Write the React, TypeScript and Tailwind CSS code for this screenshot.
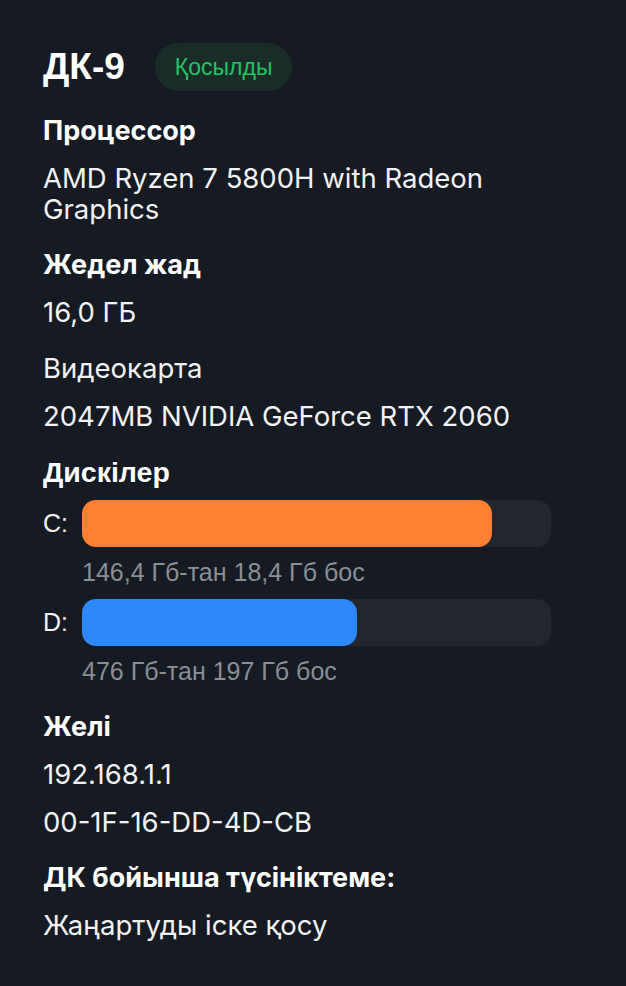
import React from "react";

const inter = { fontFamily: "Inter, 'Noto Sans', sans-serif" };
const arial = { fontFamily: "'Liberation Sans', Arial, sans-serif" };

function Heading({ children, font = "inter" }: { children: React.ReactNode; font?: "inter" | "arial" }) {
  return (
    <div
      className={
        font === "inter"
          ? "text-[27px] font-bold leading-[30px] text-white"
          : "text-[28.5px] font-bold leading-[30px] text-white"
      }
      style={font === "inter" ? inter : arial}
    >
      {children}
    </div>
  );
}

function Value({ children }: { children: React.ReactNode }) {
  return (
    <div className="mt-[17px] text-[27.5px] leading-[31px] text-[#f2f2f2]" style={inter}>
      {children}
    </div>
  );
}

function Disk({ label, pct, color, text }: { label: string; pct: number; color: string; text: string }) {
  return (
    <div className="flex flex-col">
      <div className="flex items-center">
        <div className="w-[39px] text-[25px] text-[#f2f2f2]" style={arial}>
          {label}
        </div>
        <div className="h-[47px] w-[469px] rounded-[14px] bg-[#22262d]">
          <div className={`h-full rounded-[14px] ${color}`} style={{ width: `${pct}%` }} />
        </div>
      </div>
      <div className="ml-[39px] mt-[12px] text-[25px] leading-[26px] text-[#8a8e95]" style={arial}>
        {text}
      </div>
    </div>
  );
}

export default function App() {
  return (
    <div className="min-h-[986px] w-[626px] bg-[#161b23] px-[43px] pt-[43px]">
      <div className="flex items-center gap-[30px]">
        <div className="text-[37px] font-bold leading-[48px] text-white" style={arial}>
          ДК-9
        </div>
        <div
          className="flex h-[48px] items-center rounded-full bg-[#1a2c27] px-[20px] text-[23px] text-[#22c463]"
          style={arial}
        >
          Қосылды
        </div>
      </div>

      <div className="mt-[25px] flex flex-col">
        <Heading>Процессор</Heading>
        <Value>
          AMD Ryzen 7 5800H with Radeon
          <br />
          Graphics
        </Value>

        <div className="mt-[25px]">
          <Heading>Жедел жад</Heading>
        </div>
        <Value>16,0 ГБ</Value>

        <div className="mt-[25px] text-[27.5px] leading-[31px] text-[#f2f2f2]" style={inter}>
          Видеокарта
        </div>
        <Value>2047MB NVIDIA GeForce RTX 2060</Value>

        <div className="mt-[25px]">
          <Heading font="arial">Дискілер</Heading>
        </div>
        <div className="mt-[13px] flex flex-col gap-[14px]">
          <Disk label="C:" pct={87.4} color="bg-[#ff7f33]" text="146,4 Гб-тан 18,4 Гб бос" />
          <Disk label="D:" pct={58.6} color="bg-[#2d88fa]" text="476 Гб-тан 197 Гб бос" />
        </div>

        <div className="mt-[28px]">
          <Heading>Желі</Heading>
        </div>
        <Value>192.168.1.1</Value>
        <Value>00-1F-16-DD-4D-CB</Value>

        <div className="mt-[25px]">
          <Heading>ДК бойынша түсініктеме:</Heading>
        </div>
        <Value>Жаңартуды іске қосу</Value>
      </div>
    </div>
  );
}
